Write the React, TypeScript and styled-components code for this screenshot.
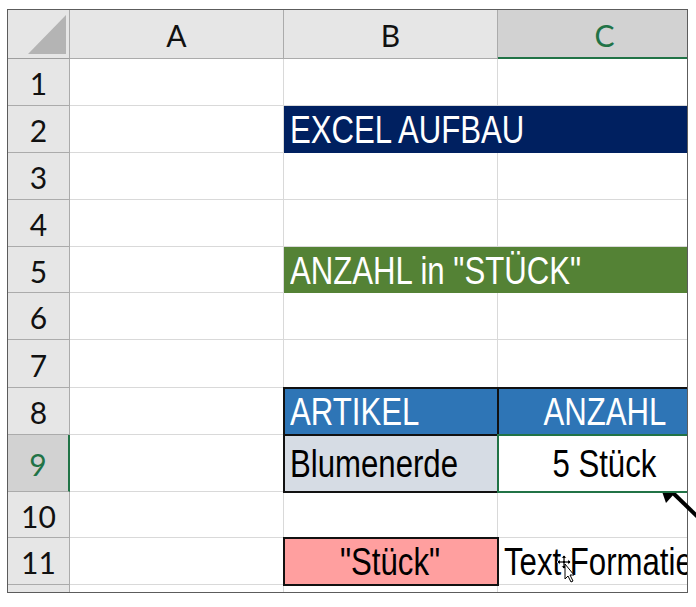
import React from "react";
import styled, { createGlobalStyle, css } from "styled-components";

const GRID = "#d9d9d9";
const HEAD_BG = "#e6e6e6";
const HEAD_SEL = "#d2d2d2";
const HEAD_LINE = "#ababab";
const XL_GREEN = "#217346";

const Global = createGlobalStyle`
  html, body {
    margin: 0;
    padding: 0;
    background: #ffffff;
  }
`;

const Page = styled.div`
  position: relative;
  width: 696px;
  height: 607px;
  padding: 9px 0 0 7px;
  box-sizing: border-box;
`;

const Frame = styled.div`
  width: 681px;
  height: 584px;
  border: 1px solid #5c5c5c;
  box-sizing: border-box;
  overflow: hidden;
`;

const Sheet = styled.div`
  display: grid;
  grid-template-columns: 62px 214px 214px 214px;
  grid-template-rows: 49px 47px 47px 47px 47px 46px 47px 48px 47px 57px 46px 47px 20px;
`;

const Corner = styled.div`
  display: flex;
  justify-content: flex-end;
  align-items: flex-end;
  padding: 0 3px 4px 0;
  box-sizing: border-box;
  background: ${HEAD_BG};
  border-right: 1px solid ${HEAD_LINE};
  border-bottom: 1px solid #9e9e9e;
`;

const SelectAll = styled.div`
  width: 38px;
  height: 39px;
  background: #b4b4b4;
  clip-path: polygon(100% 0, 100% 100%, 0 100%);
`;

const HeadCell = styled.div<{ $sel?: boolean; $side?: boolean }>`
  display: flex;
  align-items: center;
  justify-content: center;
  box-sizing: border-box;
  font-family: Lato, "Noto Sans", sans-serif;
  font-size: 30px;
  color: ${(p) => (p.$sel ? XL_GREEN : "#111")};
  background: ${(p) => (p.$sel ? HEAD_SEL : HEAD_BG)};
  border-right: 1px solid ${HEAD_LINE};
  border-bottom: 1px solid ${HEAD_LINE};
  padding-top: 2px;
  ${(p) =>
    p.$sel && !p.$side &&
    css`
      border-bottom: 2px solid ${XL_GREEN};
    `}
  ${(p) =>
    p.$sel && p.$side &&
    css`
      border-right: 2px solid ${XL_GREEN};
    `}
`;

const Cell = styled.div<{
  $fill?: string;
  $color?: string;
  $center?: boolean;
  $span?: number;
  $ring?: string;
}>`
  position: relative;
  display: flex;
  align-items: center;
  justify-content: ${(p) => (p.$center ? "center" : "flex-start")};
  box-sizing: border-box;
  padding: 3px 6px 0;
  grid-column: span ${(p) => p.$span ?? 1};
  background: ${(p) => p.$fill ?? "#ffffff"};
  color: ${(p) => p.$color ?? "#000"};
  border-right: 1px solid ${(p) => p.$fill ?? GRID};
  border-bottom: 1px solid ${(p) => p.$fill ?? GRID};
  white-space: nowrap;
  ${(p) =>
    p.$ring &&
    css`
      outline: 2px solid ${p.$ring};
      outline-offset: -1px;
      z-index: ${p.$ring === XL_GREEN ? 2 : 1};
    `}
`;

/* Arial Narrow look: Liberation Sans squeezed horizontally */
const Narrow = styled.span<{ $center?: boolean }>`
  display: inline-block;
  flex: none;
  font-family: "Liberation Sans", Arial, sans-serif;
  font-size: 38px;
  transform: scaleX(0.82);
  transform-origin: ${(p) => (p.$center ? "center" : "left")};
`;

const Overlay = styled.svg`
  position: absolute;
  left: 0;
  top: 0;
  pointer-events: none;
`;

type CellDef = {
  text?: string;
  fill?: string;
  color?: string;
  center?: boolean;
  span?: number;
  ring?: string;
};

const rows: { n: number; cells: CellDef[] }[] = [
  { n: 1, cells: [{}, {}, {}] },
  { n: 2, cells: [{}, { text: "EXCEL AUFBAU", fill: "#002060", color: "#fff", span: 2 }] },
  { n: 3, cells: [{}, {}, {}] },
  { n: 4, cells: [{}, {}, {}] },
  { n: 5, cells: [{}, { text: 'ANZAHL in "STÜCK"', fill: "#548235", color: "#fff", span: 2 }] },
  { n: 6, cells: [{}, {}, {}] },
  { n: 7, cells: [{}, {}, {}] },
  {
    n: 8,
    cells: [
      {},
      { text: "ARTIKEL", fill: "#2e75b6", color: "#fff", ring: "#111" },
      { text: "ANZAHL", fill: "#2e75b6", color: "#fff", center: true, ring: "#111" },
    ],
  },
  {
    n: 9,
    cells: [
      {},
      { text: "Blumenerde", fill: "#d6dce4", ring: "#111" },
      { text: "5 Stück", center: true, ring: XL_GREEN },
    ],
  },
  { n: 10, cells: [{}, {}, {}] },
  {
    n: 11,
    cells: [
      {},
      { text: '"Stück"', fill: "#ff9f9f", center: true, ring: "#111" },
      { text: "Text Formatierung" },
    ],
  },
  { n: 12, cells: [{}, {}, {}] },
];

export default function App() {
  return (
    <>
      <Global />
      <Page>
        <Frame>
          <Sheet>
            <Corner>
              <SelectAll />
            </Corner>
            <HeadCell>A</HeadCell>
            <HeadCell>B</HeadCell>
            <HeadCell $sel>C</HeadCell>
            {rows.map((r) => (
              <React.Fragment key={r.n}>
                <HeadCell $sel={r.n === 9} $side>
                  {r.n < 12 ? r.n : null}
                </HeadCell>
                {r.cells.map((c, i) => (
                  <Cell
                    key={i}
                    $fill={c.fill}
                    $color={c.color}
                    $center={c.center}
                    $span={c.span}
                    $ring={c.ring}
                  >
                    {c.text && <Narrow $center={c.center}>{c.text}</Narrow>}
                  </Cell>
                ))}
              </React.Fragment>
            ))}
          </Sheet>
        </Frame>

        {/* pointer arrow to the "5 Stück" cell */}
        <Overlay width="696" height="607" viewBox="0 0 696 607">
          <line x1="671" y1="491" x2="702" y2="521" stroke="#000" strokeWidth="4" />
          <polygon points="657,477 683,484 666,503" fill="#000" />

          {/* move cursor */}
          <g transform="translate(557 555)">
            <path
              d="M7 0 L10 3 L8 3 L8 6 L11 6 L11 4 L14 7 L11 10 L11 8 L8 8 L8 11 L10 11 L7 14 L4 11 L6 11 L6 8 L3 8 L3 10 L0 7 L3 4 L3 6 L6 6 L6 3 L4 3 Z"
              fill="#000"
              stroke="#fff"
              strokeWidth="0.8"
            />
            <path
              d="M8 9 L8 24 L11 21 L14 27 L16 26 L13 20 L17 20 Z"
              fill="#fff"
              stroke="#000"
              strokeWidth="1"
            />
          </g>
        </Overlay>
      </Page>
    </>
  );
}
